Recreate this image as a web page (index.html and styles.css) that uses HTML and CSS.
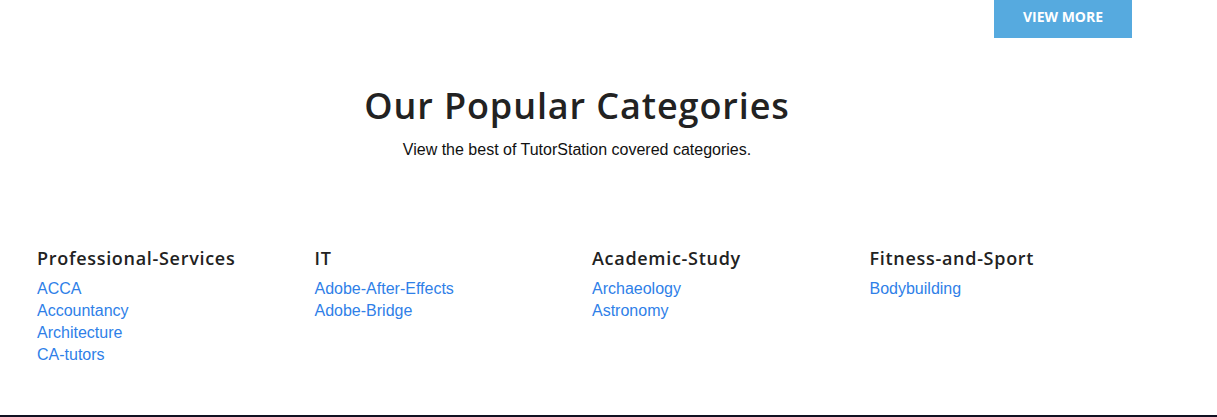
FILE: index.html
```html
<!DOCTYPE html>
<html lang="en">
<head>
<meta charset="utf-8">
<title>Our Popular Categories</title>
<link rel="stylesheet" href="styles.css">
</head>
<body>
<div class="page">
  <div class="container">
    <div class="more-row">
      <a class="btn-more" href="#">View More</a>
    </div>
    <div class="intro">
      <h2 class="title">Our Popular Categories</h2>
      <p class="subtitle">View the best of TutorStation covered categories.</p>
    </div>
    <div class="cats">
      <div class="cat">
        <h3 class="cat-title">Professional-Services</h3>
        <ul class="cat-list">
          <li><a href="#">ACCA</a></li>
          <li><a href="#">Accountancy</a></li>
          <li><a href="#">Architecture</a></li>
          <li><a href="#">CA-tutors</a></li>
        </ul>
      </div>
      <div class="cat">
        <h3 class="cat-title">IT</h3>
        <ul class="cat-list">
          <li><a href="#">Adobe-After-Effects</a></li>
          <li><a href="#">Adobe-Bridge</a></li>
        </ul>
      </div>
      <div class="cat">
        <h3 class="cat-title">Academic-Study</h3>
        <ul class="cat-list">
          <li><a href="#">Archaeology</a></li>
          <li><a href="#">Astronomy</a></li>
        </ul>
      </div>
      <div class="cat">
        <h3 class="cat-title">Fitness-and-Sport</h3>
        <ul class="cat-list">
          <li><a href="#">Bodybuilding</a></li>
        </ul>
      </div>
    </div>
  </div>
</div>
<footer class="footer"></footer>
</body>
</html>
```
FILE: styles.css
```css
html, body {
  margin: 0;
  padding: 0;
  background: #ffffff;
}
body {
  font-family: "Liberation Sans", Arial, sans-serif;
  font-size: 16px;
  color: #111111;
}
.page {
  width: 1154px;
}
.container {
  width: 1110px;
  margin: 0 auto;
  height: 415px;
}
.more-row {
  display: flex;
  justify-content: flex-end;
}
.btn-more {
  display: flex;
  align-items: center;
  justify-content: center;
  box-sizing: border-box;
  width: 138px;
  height: 38px;
  padding-bottom: 6px;
  background: #56aadf;
  color: #ffffff;
  font-family: "Open Sans", sans-serif;
  font-weight: 700;
  font-size: 14px;
  text-transform: uppercase;
  text-decoration: none;
}
.intro {
  text-align: center;
  padding-top: 46px;
}
.title {
  margin: 0;
  font-family: "Open Sans", sans-serif;
  font-weight: 600;
  font-size: 36px;
  letter-spacing: 0.9px;
  line-height: 44px;
  color: #222222;
}
.subtitle {
  margin: 12px 0 0;
  font-size: 16px;
  line-height: 20px;
  color: #111111;
}
.cats {
  display: grid;
  grid-template-columns: repeat(4, 1fr);
  margin-top: 86px;
}
.cat {
  padding: 0 15px;
}
.cat-title {
  margin: 0 0 8px;
  font-family: "Open Sans", sans-serif;
  font-weight: 600;
  font-size: 18px;
  letter-spacing: 0.7px;
  line-height: 24px;
  color: #222222;
}
.cat-list {
  list-style: none;
  margin: 0;
  padding: 0;
}
.cat-list li {
  line-height: 22px;
}
.cat-list a {
  color: #2f7fe8;
  text-decoration: none;
}
.footer {
  border-top: 2px solid #111122;
}
```
